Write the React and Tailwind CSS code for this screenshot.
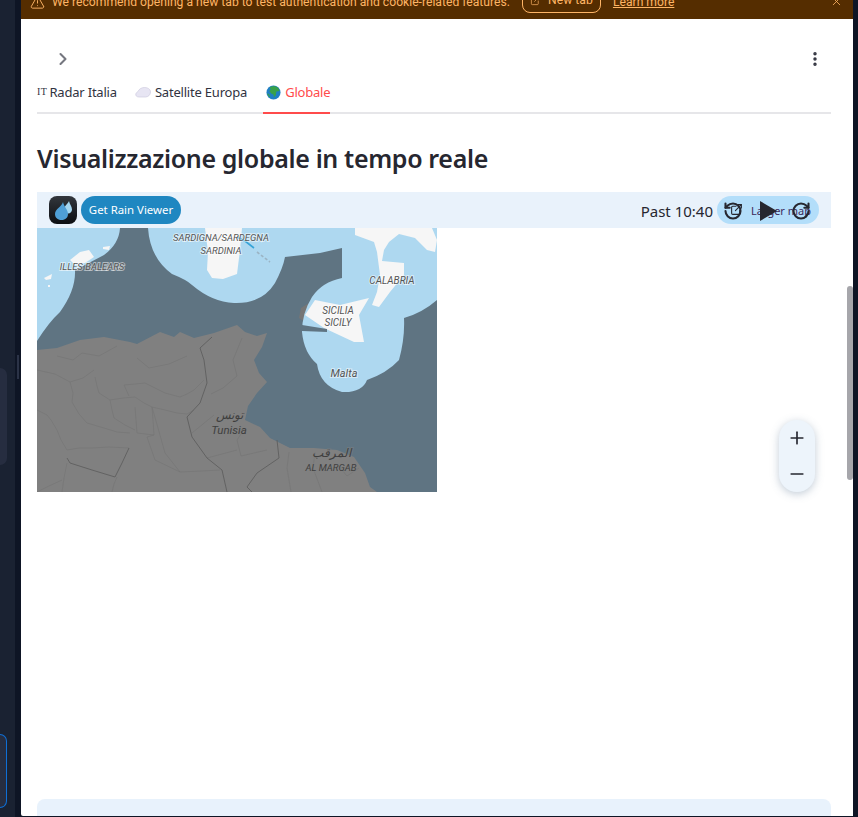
import { ChevronRight, X, TriangleAlert, ExternalLink, RotateCcw, RotateCw, Plus, Minus, EllipsisVertical } from 'lucide-react';

const tabFont = { fontFamily: '"Noto Sans", sans-serif' };

const CountryBorders = () => (
  <g fill="none" strokeLinejoin="round">
    <g stroke="#737373" strokeWidth="0.6">
      <path d="M0 182 L10 187 L14 192 L20 202 L24 212 L30 222 L42 220 L55 220 L72 219 L92 220" />
      <path d="M33 154 L36 165 L35 174 L42 186 L50 195 L67 200 L80 204 L93 205" />
      <path d="M98 179 L99 192 L100 205 L117 207 L116 192 L115 179" />
      <path d="M73 172 L75 182 L77 190 L88 197 L98 202" />
      <path d="M73 172 L86 170 L98 169 L107 175 L115 179 L128 182 L140 185 L150 186 L157 182" />
      <path d="M115 179 L121 200 L128 225 L143 244 L165 243 L183 242" />
      <path d="M30 235 L27 250 L25 264 M25 252 L12 258 L0 264 M80 249 L77 256 L75 264" />
      <path d="M143 244 L118 232 L110 209 L117 207" />
      <path d="M170 230 L185 226 L200 222 M155 205 L166 196 L177 187" />
      <path d="M0 142 L18 146 L33 154 L46 150 L57 142 M87 157 L98 156 L108 155 L118 160 L128 165 L143 169 L150 166 L157 162 L167 152" />
      <path d="M58 149 L60 158 L62 165 L73 172 M87 157 L92 168" />
      <path d="M20 128 L36 132 L45 125 L62 128 L80 118 M100 130 L112 140 L132 136 L150 128" />
      <path d="M205 110 L196 132 L200 148 L186 160 L174 166 M208 200 L200 212 L204 228 L230 222" />
      <path d="M252 224 L250 240 L254 264 M278 224 L276 240 L285 264 M300 236 L310 248 L322 240" />
    </g>
    <g stroke="#5f5f5f" strokeWidth="0.9">
      <path d="M175 109 L163 120 L167 132 L170 155 L163 175 L150 189 L155 209 L170 230 L185 242 L190 264" />
      <path d="M30 230 L33 235 L55 242 L78 249 L85 235 L92 220" />
      <path d="M240 212 L242 230 L220 245 L210 259 L215 264" />
    </g>
  </g>
);

const MapLabel = ({ x, y, size = 10, children, fill = '#555555', halo = 'rgba(255,255,255,0.5)' }) => (
  <text
    x={x}
    y={y}
    textAnchor="middle"
    fontSize={size}
    fontStyle="italic"
    fontFamily="Roboto, sans-serif"
    fill={fill}
    stroke={halo}
    strokeWidth="2"
    paintOrder="stroke"
  >
    {children}
  </text>
);

const RadarMap = () => (
  <svg width="400" height="264" viewBox="0 0 400 264" className="block">
    <rect width="400" height="264" fill="#5f7482" />

    {/* land under the radar gap */}
    <path
      d="M0 122 L20 120 L43 112 L67 109 L93 114 L100 116 L123 104 L137 109 L143 104 L157 110 L177 105 L200 97 L208 104 L220 108 L230 105 L225 119 L217 132 L222 145 L230 154 L220 165 L211 178 L208 192 L223 199 L233 210 L253 220 L277 220 L300 222 L317 229 L328 245 L333 259 L340 264 L0 264 Z"
      fill="#808080"
    />
    <CountryBorders />
    <path d="M262 90 L264 80 L272 75 L272 84 L268 94 Z" fill="#767676" />

    {/* radar coverage */}
    <path d="M83 0 Q82 16 67 27 Q50 36 38 42 Q39 62 23 84 Q12 94 0 113 L0 0 Z" fill="#aed8f0" />
    <path
      d="M111 0 Q113 30 135 46 Q150 52 155 57 Q175 74 197 75 Q225 76 238 55 Q246 40 248 29 L283 25 L305 20 L305 50 Q285 54 275 69 Q265 85 265 104 Q267 125 280 136 Q283 158 305 164 Q325 165 330 152 Q350 145 362 132 Q368 110 367 90 Q385 85 400 72 L400 0 Z"
      fill="#aed8f0"
    />

    {/* islands */}
    <path d="M33 32 L43 24 L52 22 L57 29 L48 35 L38 37 Z" fill="#f6f6f6" />
    <path d="M66 19 L73 18 L72 22 L66 21 Z" fill="#f6f6f6" />
    <path d="M7 50 L15 46 L14 51 L9 52 Z M11 57 L13 57 L13 59 L11 59 Z" fill="#f6f6f6" />
    <path d="M168 0 L205 0 L203 22 L200 46 L186 51 L175 50 L170 42 L171 24 Z" fill="#f6f6f6" />
    <path d="M268 87 L278 72 L303 77 L332 70 L322 87 L327 114 L317 114 L287 100 Z" fill="#f6f6f6" />
    <path d="M265 97 L290 101 L290 104 L265 103 Z" fill="#5f7482" />
    <path d="M318 0 L395 0 L400 12 L398 24 L390 22 L378 10 L362 6 L352 14 L347 22 L345 33 L367 35 L367 47 L353 64 L342 79 L335 77 L340 64 L343 47 L340 24 L337 14 L318 7 Z" fill="#f6f6f6" />

    <path d="M200 9 L208 13 L217 20" fill="none" stroke="#36a4d8" strokeWidth="1.6" />
    <path d="M220 24 L233 34" stroke="#9bb4c4" strokeWidth="1.6" strokeDasharray="3 2" />

    <MapLabel x={55} y={42} size={9.5}>ILLES BALEARS</MapLabel>
    <MapLabel x={184} y={13} size={9.5}>SARDIGNA/SARDEGNA</MapLabel>
    <MapLabel x={184} y={26} size={9.5}>SARDINIA</MapLabel>
    <MapLabel x={355} y={56} size={10}>CALABRIA</MapLabel>
    <MapLabel x={301} y={86} size={10}>SICILIA</MapLabel>
    <MapLabel x={301} y={98} size={10}>SICILY</MapLabel>
    <MapLabel x={307} y={149} size={11}>Malta</MapLabel>
    <MapLabel x={192} y={191} size={12} fill="#3f3f3f" halo="rgba(128,128,128,0.5)">تونس</MapLabel>
    <MapLabel x={192} y={206} size={11.5} fill="#3f3f3f" halo="rgba(128,128,128,0.5)">Tunisia</MapLabel>
    <MapLabel x={294} y={229} size={12} fill="#3f3f3f" halo="rgba(128,128,128,0.5)">المرقب</MapLabel>
    <MapLabel x={294} y={243} size={9.5} fill="#3f3f3f" halo="rgba(128,128,128,0.5)">AL MARGAB</MapLabel>
  </svg>
);

const RainLogo = () => (
  <div className="flex h-7 w-7 items-center justify-center rounded-lg bg-gradient-to-b from-[#33373d] to-[#0d0f13]">
    <svg width="28" height="28" viewBox="0 0 28 28">
      <path d="M20 5 C20.5 8 23 10.5 23 13.5 C23 15.8 21.5 17.5 19 17.5 C16.5 17.5 15 15.8 15 13.5 C15 10 19 8 20 5 Z" fill="#a4d6f0" />
      <path d="M14 6 C15 11 19 13.5 19 18 C19 21.5 16.5 24 12.5 24 C8.5 24 6 21.5 6 18 C6 13 12.5 11 14 6 Z" fill="#4f9fd6" />
    </svg>
  </div>
);

const CloudIcon = () => (
  <svg width="16" height="12" viewBox="0 0 16 12">
    <path d="M4 11 C1.5 11 0.5 9.5 0.8 8 C1 6.5 2.5 6 3 5.5 C4 3 6.5 1.5 9.5 1.5 C12.5 1.5 15.5 3 15.5 6 C15.5 9 13 11 10.5 11 Z" fill="#e7e5f3" stroke="#cfcce0" strokeWidth="0.7" />
  </svg>
);

const GlobeIcon = () => (
  <svg width="15" height="15" viewBox="0 0 16 16">
    <circle cx="8" cy="8" r="7.5" fill="#1f7fc4" />
    <path d="M4 2 L9 1 L13 3 L14.5 6.5 L11 7 L10.5 11 L8.5 13 L8 10 L5.5 9 L3.5 6.5 L5 5 Z" fill="#38a14a" />
    <path d="M1 9 L3 9.5 L4.5 12.5 L3.5 13 Z" fill="#38a14a" />
  </svg>
);

const App = () => {
  return (
    <div className="flex h-[817px] w-[858px] overflow-hidden bg-[#0e1525]" style={tabFont}>
      {/* app sidebar behind the dialog */}
      <div className="flex h-full w-[21px] shrink-0">
        <div className="flex w-[15px] flex-col bg-[#1a2232]">
          <div className="mt-[368px] h-[97px] w-[7px] rounded-r-lg bg-[#262d40]" />
          <div className="mt-[269px] h-[74px] w-[7px] rounded-r-lg border border-l-0 border-[#0f6fd6] bg-[#262d40]" />
        </div>
        <div className="relative w-[6px]">
          <div className="absolute left-[2px] top-[355px] h-6 w-[2px] bg-[#2b3347]" />
        </div>
      </div>

      {/* dialog */}
      <div className="relative flex h-[816px] w-[832px] shrink-0 flex-col overflow-hidden rounded-bl-[2px] bg-white">
        <div
          className="flex h-[19px] shrink-0 items-end overflow-hidden bg-[#552d00] pb-[8px] pl-[9px] pr-[10px] text-[12.15px] text-[#ffb566]"
          style={{ fontFamily: 'Roboto, sans-serif' }}
        >
          <TriangleAlert size={15} strokeWidth={1.5} className="mb-[1px] shrink-0" />
          <span className="ml-[7px] whitespace-nowrap">We recommend opening a new tab to test authentication and cookie-related features.</span>
          <span className="mb-[-2px] ml-3 flex h-[26px] w-[79px] shrink-0 items-center justify-center gap-[7px] rounded-lg border border-[#ffb566]">
            <ExternalLink size={11} strokeWidth={1.5} />
            New tab
          </span>
          <span className="ml-3 whitespace-nowrap underline">Learn more</span>
          <X size={13} strokeWidth={1.5} className="mb-[3px] ml-auto" />
        </div>

        <div className="flex flex-1 flex-col pl-4 pr-[22px]">
          <div className="mt-[31px] flex h-[18px] items-center justify-between">
            <ChevronRight size={20} strokeWidth={2.5} className="ml-[16px] text-[#75777f]" />
            <EllipsisVertical size={18} strokeWidth={2.6} className="mr-[7px] text-[#31333f]" />
          </div>

          <div className="mt-[6px] flex h-[40px] items-center gap-4 border-b-2 border-[#e6e6e9] text-[13px] leading-none text-[#31333f]">
            <span className="mb-[2px] flex items-center gap-[2px] whitespace-nowrap tracking-[-0.2px]">
              <span className="text-[10px] tracking-[0.5px]" style={{ fontFamily: '"Liberation Serif", serif' }}>IT</span>
              Radar Italia
            </span>
            <span className="mb-[2px] ml-[2px] flex items-center gap-1 whitespace-nowrap tracking-[-0.2px]">
              <CloudIcon />
              Satellite Europa
            </span>
            <span className="mb-[-2px] flex h-[40px] items-center gap-1 whitespace-nowrap border-b-2 border-[#ff4b4b] pl-[3px] pb-[2px] tracking-[-0.2px] text-[#ff4b4b]">
              <GlobeIcon />
              Globale
            </span>
          </div>

          <h2 className="mt-[27px] whitespace-nowrap text-[25px] font-semibold leading-[34px] tracking-[-0.35px] text-[#262730]">
            Visualizzazione globale in tempo reale
          </h2>

          <div className="relative mt-[17px] flex flex-col">
            <div className="flex h-[36px] items-center bg-[#e9f2fb] pl-3 pr-3">
              <RainLogo />
              <span className="ml-1 flex h-7 w-[100px] items-center justify-center rounded-full bg-[#1f87c1] text-[11.4px] text-white">Get Rain Viewer</span>
              <span className="ml-auto pt-[2px] text-[15px] text-[#262730]">Past 10:40</span>
              <span className="relative ml-1 flex h-7 w-[102px] items-center justify-center rounded-full bg-[#b3defa] pl-[26px] pt-[2px] text-[11px] text-[#3b2a5c]">
                Larger map
                <ExternalLink size={13} strokeWidth={2} className="absolute left-[13px] top-[7px] text-[#262730]" />
                <RotateCcw size={20} strokeWidth={2.5} className="absolute left-[6px] top-[5px] text-[#262730]" />
                <svg width="20" height="22" viewBox="0 0 20 22" className="absolute left-[41px] top-[4px]">
                  <path d="M2 1 L19 11 L2 21 Z" fill="#262730" />
                </svg>
                <RotateCw size={20} strokeWidth={2.5} className="absolute left-[74px] top-[5px] text-[#262730]" />
              </span>
            </div>
            <RadarMap />
            {/* zoom buttons sit over the map frame */}
            <div className="absolute right-4 top-[228px] flex h-[72px] w-9 flex-col items-center justify-center gap-[16px] rounded-full bg-[#edf4fb] text-[#262730] shadow-[0_2px_8px_rgba(80,110,140,0.35)]">
              <Plus size={20} strokeWidth={2} />
              <Minus size={20} strokeWidth={2} />
            </div>
          </div>

          <div className="mt-[307px] h-8 rounded-t-lg bg-[#e8f2fc]" />
        </div>

        {/* scrollbar */}
        <div className="absolute right-0 top-[286px] h-[194px] w-[6px] rounded-sm bg-[#a6a6ab]" />
      </div>
    </div>
  );
};

export default App;
